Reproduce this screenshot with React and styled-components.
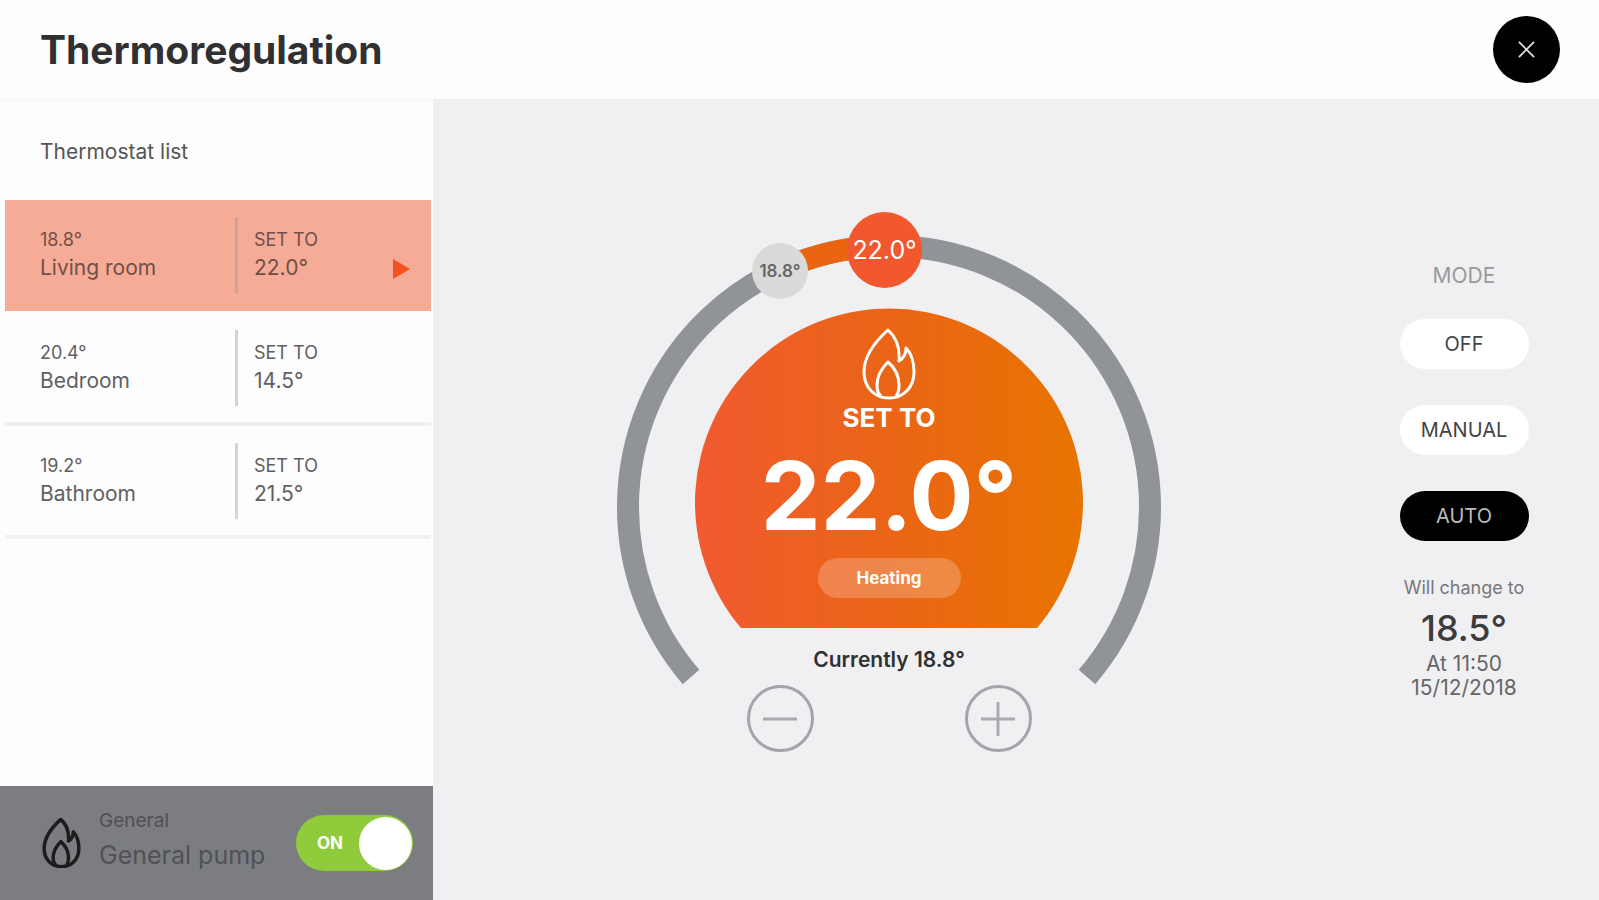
import React, { useState } from 'react';
import styled, { createGlobalStyle } from 'styled-components';

const rooms = [
  { name: 'Living room', current: '18.8°', target: '22.0°' },
  { name: 'Bedroom', current: '20.4°', target: '14.5°' },
  { name: 'Bathroom', current: '19.2°', target: '21.5°' },
];

const modes = ['OFF', 'MANUAL', 'AUTO'];

const FlameIcon = ({ stroke }) => (
  <svg viewBox="0 0 56 72" fill="none" stroke="currentColor" strokeWidth={stroke} strokeLinejoin="round" aria-hidden="true">
    <path d="M27 2C17 11 3 27 3 44C3 60 14 70 28 70C42 70 53 60 53 44C53 34 51 26 45 20C45 26 43 30 38 33C39 21 36 10 27 2Z" />
    <path d="M20 68C16 65 16 61 16 57C16 48 21 40 27 34C34 40 38 48 38 57C38 61 38 65 35 68" />
  </svg>
);

const App = () => {
  const [room, setRoom] = useState('Living room');
  const [mode, setMode] = useState('AUTO');
  const [target, setTarget] = useState(22);
  const [pumpOn, setPumpOn] = useState(true);

  const targetText = `${target.toFixed(1)}°`;

  return (
    <Page>
      <GlobalStyle />
      <Header>
        <Title>Thermoregulation</Title>
        <CloseButton aria-label="Close">
          <svg width="17" height="17" viewBox="0 0 18 18" stroke="currentColor" strokeWidth="2">
            <path d="M1 1L17 17M17 1L1 17" />
          </svg>
        </CloseButton>
      </Header>
      <Body>
        <Sidebar>
          <ListTitle>Thermostat list</ListTitle>
          <RoomList>
            {rooms.map((r) => (
              <li key={r.name}>
                <RoomButton $active={r.name === room} onClick={() => setRoom(r.name)}>
                  <RoomInfo>
                    <Small>{r.current}</Small>
                    <Large>{r.name}</Large>
                  </RoomInfo>
                  <RoomTarget>
                    <Small>SET TO</Small>
                    <Large>{r.target}</Large>
                  </RoomTarget>
                  {r.name === room && (
                    <Arrow viewBox="0 0 17 20" aria-hidden="true">
                      <path d="M0 0L17 10L0 20Z" fill="#f4511f" />
                    </Arrow>
                  )}
                </RoomButton>
              </li>
            ))}
          </RoomList>
          <PumpBar>
            <PumpIcon>
              <FlameIcon stroke={5} />
            </PumpIcon>
            <PumpText>
              <PumpGroup>General</PumpGroup>
              <PumpName htmlFor="pump">General pump</PumpName>
            </PumpText>
            <Toggle $on={pumpOn}>
              <ToggleInput id="pump" type="checkbox" checked={pumpOn} onChange={(e) => setPumpOn(e.target.checked)} />
              <span>{pumpOn ? 'ON' : 'OFF'}</span>
              <ToggleKnob />
            </Toggle>
          </PumpBar>
        </Sidebar>
        <Main>
          <Dial>
            <Ring viewBox="0 0 544 472" aria-hidden="true">
              <defs>
                <linearGradient id="heat" x1="0" x2="1" y1="0" y2="0">
                  <stop offset="0" stopColor="#f15a30" />
                  <stop offset="0.5" stopColor="#ea6516" />
                  <stop offset="1" stopColor="#e87400" />
                </linearGradient>
              </defs>
              <path d="M74 466A261 261 0 1 1 470 466" fill="none" stroke="#919497" strokeWidth="22" />
              <path d="M180 52A261 261 0 0 1 267 35" fill="none" stroke="#ea6412" strokeWidth="22" />
              <path d="M124 417A194 194 0 1 1 420 417Z" fill="url(#heat)" />
            </Ring>
            <CurrentKnob>18.8°</CurrentKnob>
            <TargetKnob>{targetText}</TargetKnob>
            <Readout>
              <DialIcon>
                <FlameIcon stroke={3} />
              </DialIcon>
              <SetTo>SET TO</SetTo>
              <Temperature>{targetText}</Temperature>
              <Status>Heating</Status>
              <Currently>Currently 18.8°</Currently>
              <Steppers>
                <StepButton aria-label="Lower" onClick={() => setTarget(target - 0.5)}>
                  <svg width="34" height="34" viewBox="0 0 34 34" stroke="currentColor" strokeWidth="3">
                    <path d="M0 17H34" />
                  </svg>
                </StepButton>
                <StepButton aria-label="Raise" onClick={() => setTarget(target + 0.5)}>
                  <svg width="34" height="34" viewBox="0 0 34 34" stroke="currentColor" strokeWidth="3">
                    <path d="M0 17H34M17 0V34" />
                  </svg>
                </StepButton>
              </Steppers>
            </Readout>
          </Dial>
          <ModePanel>
            <ModeTitle>MODE</ModeTitle>
            <ModeList>
              {modes.map((m) => (
                <ModeButton key={m} $active={m === mode} aria-pressed={m === mode} onClick={() => setMode(m)}>
                  {m}
                </ModeButton>
              ))}
            </ModeList>
            <NextLabel>Will change to</NextLabel>
            <NextTemp>18.5°</NextTemp>
            <NextTime>
              At 11:50
              <br />
              15/12/2018
            </NextTime>
          </ModePanel>
        </Main>
      </Body>
    </Page>
  );
};

const GlobalStyle = createGlobalStyle`
  * {
    box-sizing: border-box;
  }

  body {
    margin: 0;
    font-family: Inter, 'Liberation Sans', sans-serif;
    color: #333;
  }

  button {
    font-family: inherit;
    padding: 0;
    border: none;
    cursor: pointer;
  }
`;

const Page = styled.div`
  display: flex;
  flex-direction: column;
  min-height: 100vh;
  background: #f0f0f3;
`;

const Header = styled.header`
  display: flex;
  justify-content: space-between;
  align-items: center;
  padding: 16px 39px 16px 40px;
  background: #fdfdfd;
`;

const Title = styled.h1`
  margin: 0;
  font-size: 39px;
  line-height: 48px;
  font-weight: 700;
  color: #303032;
`;

const CloseButton = styled.button`
  display: flex;
  align-items: center;
  justify-content: center;
  width: 67px;
  height: 67px;
  border-radius: 50%;
  background: #000;
  color: #ddd;
`;

const Body = styled.div`
  flex: 1;
  display: grid;
  grid-template-columns: 433px 1fr;
`;

const Sidebar = styled.aside`
  display: flex;
  flex-direction: column;
  background: #fdfdfd;
  border-top: 1px solid #f6f6f8;
`;

const ListTitle = styled.h2`
  margin: 0;
  padding: 40px 40px 36px;
  font-size: 21px;
  line-height: 24px;
  font-weight: 400;
  color: #555;
`;

const RoomList = styled.ul`
  flex: 1;
  list-style: none;
  margin: 0;
  padding: 0 2px 0 5px;
`;

const RoomButton = styled.button`
  display: grid;
  grid-template-columns: 195px 1fr 17px;
  align-items: start;
  width: 100%;
  height: 113px;
  padding: 17px 21px 0 35px;
  text-align: left;
  color: ${(p) => (p.$active ? '#6f4f48' : '#606062')};
  background: ${(p) => (p.$active ? '#f6ab97' : 'transparent')};
  background-clip: padding-box;
  border-bottom: ${(p) => (p.$active ? '2px solid transparent' : '4px solid #f0f0f2')};
`;

const RoomInfo = styled.span`
  display: flex;
  flex-direction: column;
  padding-top: 9px;
`;

const RoomTarget = styled.span`
  display: flex;
  flex-direction: column;
  height: 76px;
  padding: 9px 0 0 16px;
  border-left: 3px solid rgba(150, 150, 155, 0.4);
`;

const Small = styled.span`
  font-size: 18px;
  line-height: 28px;
`;

const Large = styled.span`
  font-size: 21px;
  line-height: 28px;
`;

const Arrow = styled.svg`
  width: 17px;
  height: 20px;
  margin-top: 42px;
`;

const PumpBar = styled.div`
  display: flex;
  align-items: center;
  height: 114px;
  padding: 0 20px 0 42px;
  background: #7c7d80;
  color: #505154;
`;

const PumpIcon = styled.span`
  display: flex;
  width: 39px;
  height: 50px;
  color: #1c1c1d;

  svg {
    width: 100%;
    height: 100%;
  }
`;

const PumpText = styled.div`
  flex: 1;
  display: flex;
  flex-direction: column;
  padding: 0 0 9px 18px;
`;

const PumpGroup = styled.span`
  font-size: 19px;
  line-height: 32px;
`;

const PumpName = styled.label`
  font-size: 25px;
  line-height: 36px;
`;

const Toggle = styled.label`
  display: flex;
  flex-direction: ${(p) => (p.$on ? 'row' : 'row-reverse')};
  align-items: center;
  justify-content: space-between;
  width: 117px;
  height: 56px;
  padding: ${(p) => (p.$on ? '0 1px 0 21px' : '0 21px 0 1px')};
  border-radius: 28px;
  background: ${(p) => (p.$on ? '#8fcb3a' : '#a9abad')};
  color: #fff;
  font-size: 17px;
  font-weight: 700;
  cursor: pointer;
`;

const ToggleInput = styled.input`
  position: absolute;
  opacity: 0;
`;

const ToggleKnob = styled.span`
  width: 53px;
  height: 53px;
  border-radius: 50%;
  background: #fff;
`;

const Main = styled.main`
  display: grid;
  grid-template-columns: 1fr 270px;
  padding-left: 16px;
`;

const Dial = styled.section`
  position: relative;
  display: grid;
  justify-self: center;
  align-self: start;
  width: 544px;
  margin-top: 112px;
`;

const Ring = styled.svg`
  grid-area: 1 / 1;
  width: 544px;
  height: 472px;
  overflow: visible;
`;

const Readout = styled.div`
  grid-area: 1 / 1;
  display: flex;
  flex-direction: column;
  align-items: center;
  padding-top: 117px;
`;

const Knob = styled.span`
  position: absolute;
  display: flex;
  align-items: center;
  justify-content: center;
  border-radius: 50%;
`;

const CurrentKnob = styled(Knob)`
  left: 135px;
  top: 32px;
  width: 56px;
  height: 56px;
  background: #dadada;
  color: #666;
  font-size: 17px;
  font-weight: 600;
`;

const TargetKnob = styled(Knob)`
  left: 230px;
  top: 1px;
  width: 75px;
  height: 76px;
  background: #f1582d;
  color: #fff;
  font-size: 25px;
`;

const DialIcon = styled.span`
  display: flex;
  width: 56px;
  height: 72px;
  color: #fff;

  svg {
    width: 100%;
    height: 100%;
  }
`;

const SetTo = styled.span`
  margin-top: 2px;
  font-size: 26px;
  line-height: 32px;
  font-weight: 700;
  color: #fff;
`;

const Temperature = styled.strong`
  margin: 12px 0;
  font-size: 95px;
  line-height: 100px;
  font-weight: 700;
  color: #fff;
`;

const Status = styled.span`
  width: 143px;
  border-radius: 20px;
  background: rgba(255, 255, 255, 0.22);
  color: #fff;
  font-size: 17px;
  line-height: 40px;
  font-weight: 700;
  text-align: center;
`;

const Currently = styled.span`
  margin: 48px 0 11px;
  font-size: 21px;
  line-height: 28px;
  font-weight: 600;
  color: #303032;
`;

const Steppers = styled.div`
  display: flex;
  gap: 151px;
`;

const StepButton = styled.button`
  display: flex;
  align-items: center;
  justify-content: center;
  width: 67px;
  height: 67px;
  border: 3px solid #a3a6a9;
  border-radius: 50%;
  background: transparent;
  color: #a9abae;
`;

const ModePanel = styled.section`
  display: flex;
  flex-direction: column;
  align-items: center;
  padding-top: 165px;
`;

const ModeTitle = styled.h2`
  margin: 0;
  font-size: 21px;
  line-height: 24px;
  font-weight: 400;
  color: #999;
`;

const ModeList = styled.div`
  display: flex;
  flex-direction: column;
  gap: 36px;
  margin: 31px 0 37px;
`;

const ModeButton = styled.button`
  width: 129px;
  height: 50px;
  border-radius: 25px;
  font-size: 20px;
  background: ${(p) => (p.$active ? '#000' : '#fff')};
  color: ${(p) => (p.$active ? '#bbb' : '#444')};
`;

const NextLabel = styled.span`
  font-size: 18px;
  line-height: 20px;
  color: #777;
`;

const NextTemp = styled.strong`
  margin: 10px 0 4px;
  font-size: 36px;
  line-height: 40px;
  font-weight: 500;
  color: #3c3c3e;
`;

const NextTime = styled.span`
  font-size: 21px;
  line-height: 24px;
  text-align: center;
  color: #666;
`;

export default App;
